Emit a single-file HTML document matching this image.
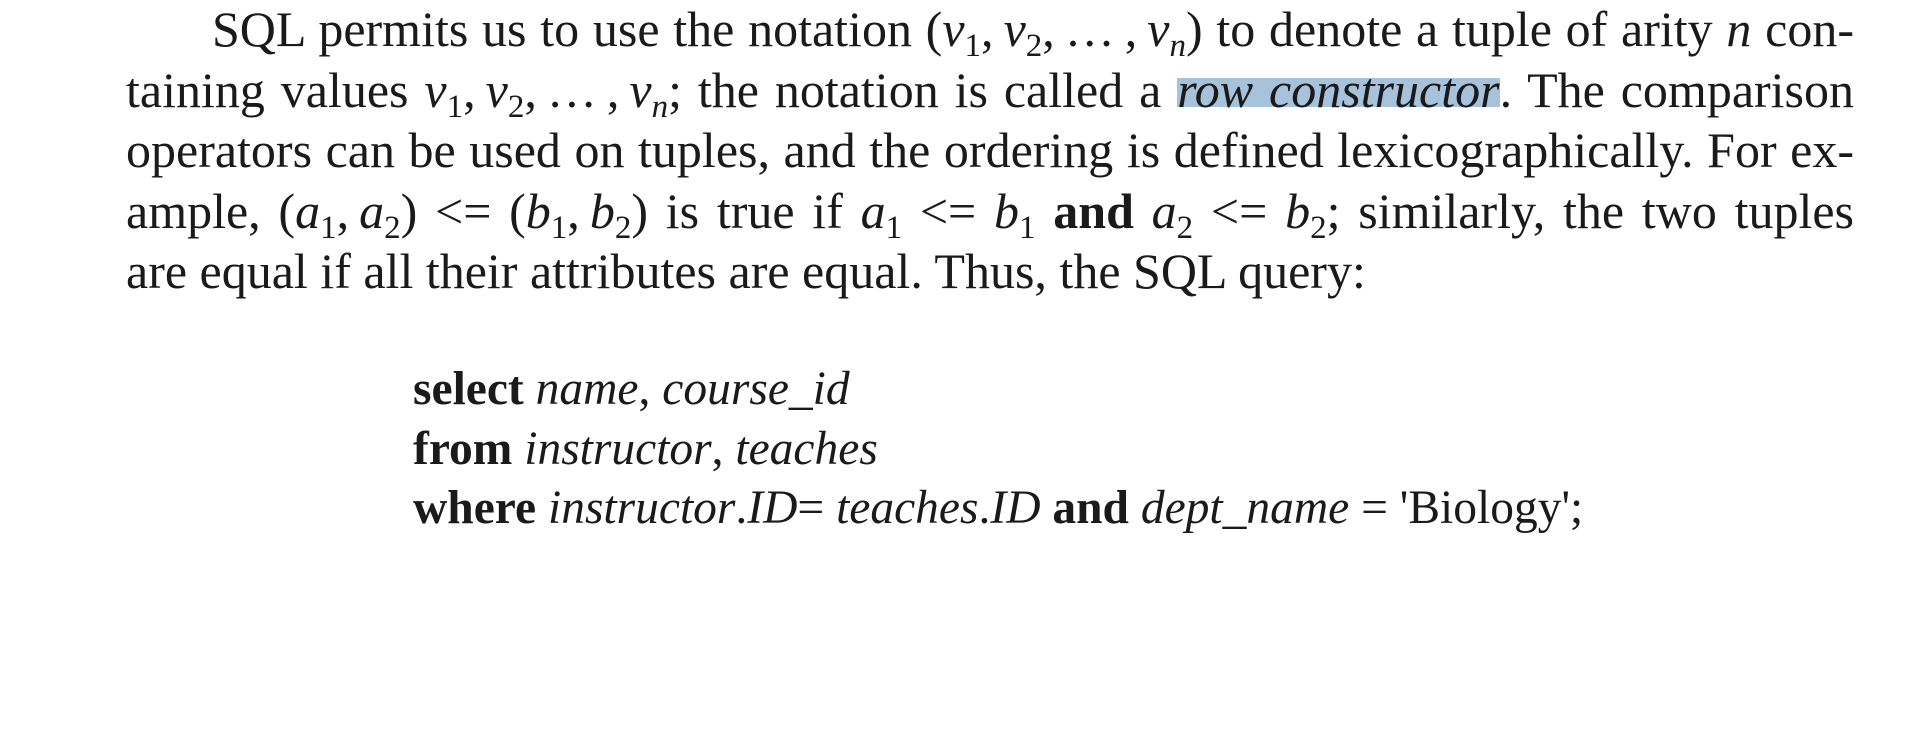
<!DOCTYPE html>
<html><head><meta charset="utf-8"><style>
html,body{margin:0;padding:0;background:#fff;}
body{width:1912px;height:752px;position:relative;overflow:hidden;font-family:"Liberation Serif","DejaVu Serif",serif;color:#1a1a1a;font-size:50px;}
.l{position:absolute;left:126px;width:1728px;height:60px;line-height:60px;white-space:nowrap;text-align:justify;text-align-last:justify;}
.l.last{text-align-last:left;}
i{font-style:italic;}
.s{font-size:0.66em;position:relative;top:0.3em;line-height:0;}
.hl{background:linear-gradient(#a7c3dc,#a7c3dc) no-repeat;background-size:100% 29px;background-position:0 16px;}
.c{position:absolute;left:413px;line-height:60px;white-space:nowrap;font-size:47.5px;}
b{font-weight:bold;}
</style></head><body>
<div class="l" style="top:-1px;left:212px;width:1642px">SQL permits us to use the notation (<i>v</i><span class="s">1</span>,&#8201;<i>v</i><span class="s">2</span>,&#8201;…&#8201;,&#8201;<i>v<span class="s">n</span></i>) to denote a tuple of arity <i>n</i> con-</div>
<div class="l" style="top:60px">taining values <i>v</i><span class="s">1</span>,&#8201;<i>v</i><span class="s">2</span>,&#8201;…&#8201;,&#8201;<i>v<span class="s">n</span></i>; the notation is called a <i class="hl">row constructor</i>. The comparison</div>
<div class="l" style="top:120px">operators can be used on tuples, and the ordering is defined lexicographically. For ex-</div>
<div class="l" style="top:181px">ample, (<i>a</i><span class="s">1</span>,&#8201;<i>a</i><span class="s">2</span>) &lt;= (<i>b</i><span class="s">1</span>,&#8201;<i>b</i><span class="s">2</span>) is true if <i>a</i><span class="s">1</span> &lt;= <i>b</i><span class="s">1</span> <b>and</b> <i>a</i><span class="s">2</span> &lt;= <i>b</i><span class="s">2</span>; similarly, the two tuples</div>
<div class="l last" style="top:241px">are equal if all their attributes are equal. Thus, the SQL query:</div>
<div class="c" style="top:359px"><b>select</b> <i>name</i>, <i>course_id</i></div>
<div class="c" style="top:419px"><b>from</b> <i>instructor</i>, <i>teaches</i></div>
<div class="c" style="top:478px"><b>where</b> <i>instructor</i>.<i>ID</i>= <i>teaches</i>.<i>ID</i> <b>and</b> <i>dept_name</i> = 'Biology';</div>
</body></html>
